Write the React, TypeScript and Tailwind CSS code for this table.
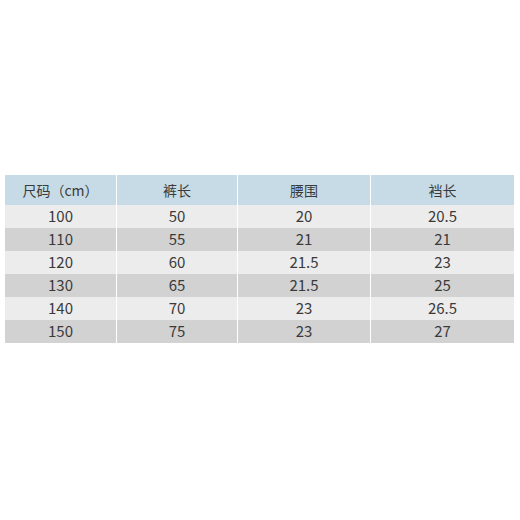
const headers = ["尺码（cm）", "裤长", "腰围", "裆长"];

const rows = [
  ["100", "50", "20", "20.5"],
  ["110", "55", "21", "21"],
  ["120", "60", "21.5", "23"],
  ["130", "65", "21.5", "25"],
  ["140", "70", "23", "26.5"],
  ["150", "75", "23", "27"],
];

const widths = ["w-[111px]", "w-[120px]", "w-[132px]", "w-[143px]"];

export default function App() {
  return (
    <div className="flex h-[520px] w-[520px] flex-col bg-white pt-[175px] pl-[5px] font-['Noto_Sans_CJK_SC','Noto_Sans',sans-serif] text-[#3a3a3a]">
      <div className="flex h-[30px] gap-[1px] bg-white text-[14px]">
        {headers.map((h, i) => (
          <div
            key={h}
            className={`${widths[i]} flex items-center justify-center bg-[#c6dbe5]`}
          >
            {h}
          </div>
        ))}
      </div>
      {rows.map((r, ri) => (
        <div key={r[0]} className="flex h-[23px] gap-[1px] bg-white text-[15px]">
          {r.map((c, i) => (
            <div
              key={i}
              className={`${widths[i]} flex items-center justify-center ${
                ri % 2 === 0 ? "bg-[#ececec]" : "bg-[#d2d2d2]"
              }`}
            >
              {c}
            </div>
          ))}
        </div>
      ))}
    </div>
  );
}
